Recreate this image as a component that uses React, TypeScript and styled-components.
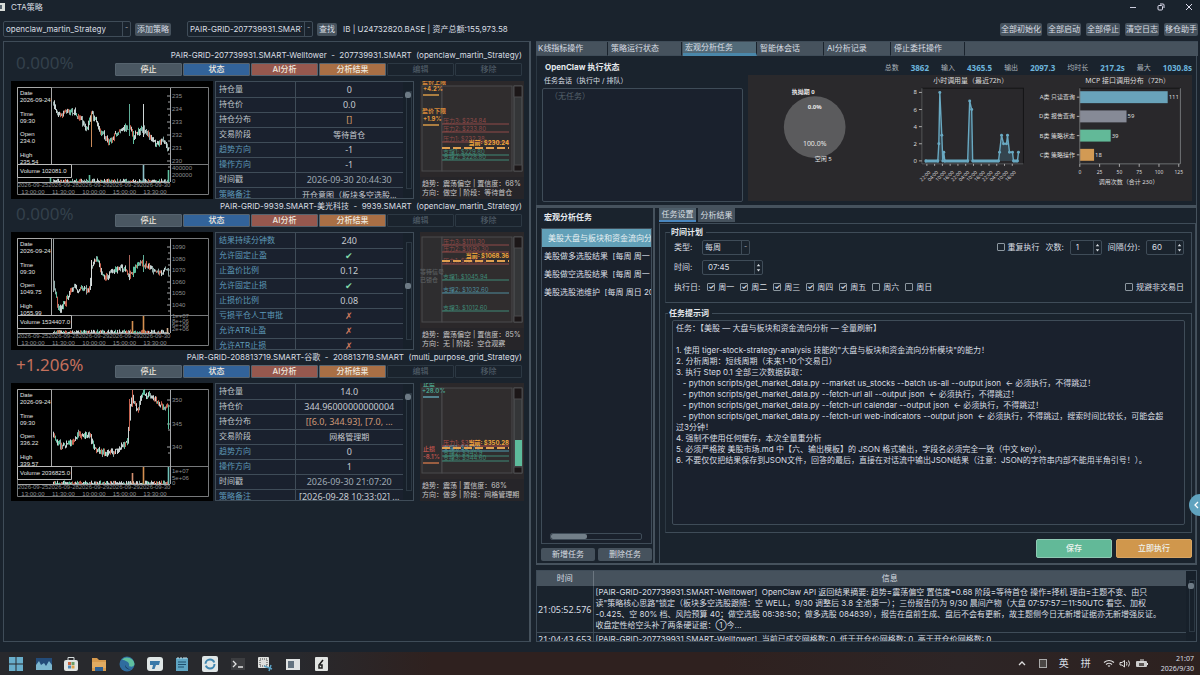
import React from "react";
import styled, { createGlobalStyle } from "styled-components";

const c = {
  bg: "#1a232d",
  deep: "#17202a",
  line: "#3f4c58",
  soft: "#2c3843",
  gray: "#46525d",
  text: "#d9dee3",
  dim: "#a9b1b8",
  teal: "#62b998",
  orange: "#d0974c",
};
const numeric = `"Noto Sans", "Noto Sans CJK SC", sans-serif`;

const Global = createGlobalStyle`
  * { box-sizing: border-box; }
  body { margin: 0; background: ${c.bg}; }
  body, button, input, select, textarea {
    font-family: Inter, "Noto Sans CJK SC", sans-serif;
    font-size: 8px; line-height: 11px; color: ${c.text};
  }
  button, input, select, textarea { margin: 0; padding: 0; border: 0; outline: 0; }
`;

/* ---------- page frame ---------- */
const Page = styled.div`
  min-height: 100vh; display: flex; flex-direction: column; background: ${c.bg}; overflow: hidden;
`;
const TitleBar = styled.header`
  display: flex; align-items: center; height: 14px; gap: 6px; padding-right: 6px;
  h1 { margin: 0; font-size: 8px; font-weight: 400; flex: 1; }
`;
const AppIcon = styled.svg`width: 5px; height: 8px;`;
const WinButtons = styled.div`display: flex; gap: 18px;`;
const WinButton = styled.button`
  background: none; width: 10px; height: 10px; display: flex;
  svg { width: 10px; height: 10px; }
`;
const Toolbar = styled.div`
  display: flex; align-items: center; height: 27px; padding: 3px 2px 0 3px; gap: 4px;
`;
const Spacer = styled.div<{ $w?: number }>`${p => (p.$w ? `width: ${p.$w}px;` : "flex: 1;")}`;
const ToolButton = styled.button`
  background: ${c.gray}; height: 13px; padding: 0 2px; border-radius: 2px; line-height: 13px; white-space: nowrap;
`;
const ToolGroup = styled.div`
  display: flex; gap: 5px;
  ${ToolButton} { padding: 0 1px; }
`;
const Account = styled.span`padding-left: 2px; white-space: nowrap;`;

const SelectBox = styled.span<{ $w: number; $h: number }>`
  position: relative; display: block; width: ${p => p.$w}px; height: ${p => p.$h}px;
  border: 1px solid ${c.line}; border-radius: 2px;
  select {
    appearance: none; display: block; width: 100%; height: 100%; background: transparent;
    padding: 0 10px 0 2px;
  }
  option { background: ${c.bg}; }
  &::after {
    content: "-"; position: absolute; right: 0; top: 0; bottom: 0; width: 7px;
    border-left: 1px solid ${c.line}; color: ${c.dim}; font-size: 7px; text-align: center; pointer-events: none;
  }
`;

const Main = styled.main`
  flex: 1; display: grid; grid-template-columns: 528fr 664fr; gap: 5px; padding: 0 0 0 3px;
`;

/* ---------- strategy cards ---------- */
const Left = styled.section`
  border: 1px solid ${c.line}; border-right: 2px solid ${c.gray}; padding: 6px 5px 0 7px; min-width: 0;
`;
const Card = styled.article`height: 151px;`;
const CardHead = styled.div`
  display: grid; grid-template-columns: 104px 1fr; grid-template-rows: 15px 13px; height: 33px; padding-right: 2px;
`;
const Percent = styled.strong<{ $up: boolean }>`
  grid-row: span 2; font-family: ${numeric}; font-weight: 400; font-size: 17px; line-height: 30px; padding-left: 5px;
  color: ${p => (p.$up ? "#c5705c" : "#33404b")};
`;
const CardTitle = styled.h2`
  margin: 0; font-weight: 400; font-size: 8px; line-height: 15px; text-align: right; white-space: pre;
`;
const CardButtons = styled.div`
  display: grid; grid-template-columns: repeat(6, 1fr); gap: 1px; height: 13px;
`;
const CardButton = styled.button<{ $bg?: string }>`
  line-height: 11px; border-radius: 1px; font-weight: ${p => (p.$bg ? 500 : 400)};
  background: ${p => p.$bg || "transparent"};
  border: 1px solid ${p => (p.$bg ? "#56636e" : c.soft)};
  color: ${p => (p.$bg ? "#efe8df" : "#56626d")};
`;
const CardBody = styled.div`
  display: grid; grid-template-columns: 202px 1fr 104px; gap: 2px; height: 118px;
`;
const Chart = styled.svg`display: block; width: 100%; height: 100%; background: #000;`;
const TableBox = styled.div`
  display: flex; border: 1px solid ${c.line}; overflow: hidden; margin-right: 4px;
`;
const Params = styled.table`
  flex: 1; border-collapse: collapse; table-layout: fixed; height: 120px; background: #1a212e;
  tr { height: 15px; border-bottom: 1px solid ${c.line}; }
  th { width: 79px; text-align: left; font-weight: 400; padding: 0 3px; border-right: 1px solid ${c.line}; white-space: nowrap; }
  td { text-align: center; padding: 0; white-space: nowrap; }
`;
const ParamName = styled.th<{ $own?: boolean }>`color: ${p => (p.$own ? "#5e9ab8" : "#bfc5ca")};`;
const ParamValue = styled.td<{ $color?: string; $cjk?: boolean }>`
  color: ${p => p.$color || "#c5cad0"}; font-family: ${numeric};
  font-size: ${p => (p.$cjk ? 8 : 9)}px;
`;
const VScroll = styled.div<{ $top: number }>`
  width: 10px; flex: none; position: relative; background: ${c.deep};
  &::before { content: ""; position: absolute; left: 3px; top: 9px; bottom: 9px; width: 4px; border: 1px solid ${c.soft}; }
  &::after { content: ""; position: absolute; left: 2px; top: ${p => p.$top}px; width: 6px; height: 6px; border-radius: 2px; background: #6d7a85; }
`;
const Ladder = styled.div`
  background: #262529; display: flex; flex-direction: column; overflow: hidden;
  svg { display: block; height: 98px; width: 104px; }
  p { margin: 0; padding-left: 2px; font-size: 7px; line-height: 9px; white-space: nowrap; color: #c6c6c6; }
`;

/* ---------- right side ---------- */
const Right = styled.section`display: flex; flex-direction: column; min-width: 0;`;
const Tabs = styled.nav`
  display: flex; gap: 1px; height: 15px; background: ${c.gray}; margin-right: 2px; border-top: 1px solid ${c.line};
`;
const Tab = styled.button<{ $w: number; $on?: boolean }>`
  width: ${p => p.$w}px; text-align: left; padding-left: 2px; line-height: 11px; white-space: nowrap;
  background: ${p => (p.$on ? "#526a78" : c.gray)};
  border-bottom: ${p => (p.$on ? "3px solid #4a87aa" : `1px solid ${c.line}`)};
  border-right: 1px solid ${c.bg};
`;
const Status = styled.div`
  display: grid; grid-template-columns: 201px 1fr; gap: 5px; height: 149px; margin-right: 3px;
  padding: 4px 4px 3px 5px; border-right: 1px solid ${c.line}; border-left: 1px solid ${c.soft};
`;
const StatusLeft = styled.div`display: flex; flex-direction: column;`;
const Heading = styled.h3`
  margin: 0; padding-left: 3px; font-size: 8px; line-height: 14px; font-weight: 700; color: #e6eaee;
`;
const Sub = styled.p`margin: 0; padding: 1px 0 0 2px; font-size: 7px; line-height: 12px;`;
const Sessions = styled.div`
  flex: 1; margin-top: 1px; border: 1px solid ${c.line}; border-radius: 2px; padding: 2px 7px; color: #56616c; background: #1a212d;
`;
const Stats = styled.dl`
  display: flex; justify-content: flex-end; margin: 0; height: 15px; align-items: center; font-size: 7px; gap: 12px;
  dt { color: ${c.dim}; }
  dd { margin: 0; font-family: ${numeric}; font-size: 8px; font-weight: 700; color: #6cb4dc; }
`;
const Figures = styled.div`
  display: grid; grid-template-columns: 152fr 142fr 152fr; background: #2a292c; height: 126px;
  svg { display: block; width: 100%; height: 100%; overflow: visible; font-family: ${numeric}; }
`;

const Work = styled.div`
  flex: 1; display: grid; grid-template-columns: 118px 1fr; gap: 4px; margin-right: 3px;
  border: 2px solid ${c.gray}; border-width: 3px 1px 2px 1px;
`;
const TaskPane = styled.div`
  display: flex; flex-direction: column; padding: 2px 1px 2px 4px; border-right: 2px solid ${c.gray}; min-width: 0;
`;
const TaskList = styled.div`
  flex: 1; display: flex; flex-direction: column; margin-top: 4px; border: 1px solid ${c.line}; background: #1a212c; overflow: hidden;
  ul { list-style: none; margin: 0; padding: 0; flex: 1; }
`;
const Task = styled.li<{ $on?: boolean }>`
  height: 18px; line-height: 18px; white-space: pre; overflow: hidden; padding-left: ${p => (p.$on ? 6 : 2)}px;
  background: ${p => (p.$on ? "#62a0b8" : "transparent")}; color: ${p => (p.$on ? "#e8f0f2" : c.text)};
`;
const HScroll = styled.div`
  height: 7px; margin: 0 9px 3px 8px; border: 1px solid ${c.line}; border-radius: 2px; display: flex;
  &::before { content: ""; width: 36px; background: #727f89; border-radius: 2px; }
`;
const TaskButtons = styled.div`
  display: grid; grid-template-columns: 1fr 1fr; gap: 3px; margin-top: 4px;
`;
const Form = styled.div`display: flex; flex-direction: column; min-width: 0;`;
const FormTabs = styled.div`display: flex; gap: 2px; height: 14px;`;
const FormTab = styled.button<{ $on?: boolean }>`
  width: 37px; line-height: 12px; white-space: nowrap; background: ${p => (p.$on ? "#4f5f6b" : c.gray)};
  border-bottom: ${p => (p.$on ? "2px solid #4a87c0" : "0")};
`;
const FormPane = styled.div`
  flex: 1; display: flex; flex-direction: column; border: 1px solid ${c.line}; border-bottom: 0; padding: 3px 3px 3px 5px; margin-top: 1px;
`;
const Group = styled.fieldset<{ $grow?: boolean }>`
  margin: 0; min-width: 0; border: 1px solid ${c.line}; padding: 0 7px 5px 8px; border-left-color: ${c.soft};
  ${p => p.$grow && "flex: 1; display: flex; flex-direction: column; margin-top: 5px; padding: 2px 6px 7px 6px;"}
  legend { font-weight: 700; line-height: 10px; padding: 0 3px 0 1px; margin-left: -4px; color: #e6eaee; }
`;
const Row = styled.div`display: flex; align-items: center; height: 20px; gap: 6px; white-space: nowrap;`;
const RowLabel = styled.label<{ $w: number }>`width: ${p => p.$w}px;`;
const Check = styled.label`
  display: flex; align-items: center; gap: 3px;
  input {
    appearance: none; width: 8px; height: 8px; border: 1px solid #8c979f; border-radius: 1px; display: grid; place-items: center;
  }
  input:checked::after { content: "✓"; font-size: 7px; line-height: 6px; font-weight: 700; }
`;
const Days = styled.div`display: flex; gap: 6px; flex: 1; padding-left: 1px;`;
const Spin = styled.span<{ $w: number }>`
  display: flex; width: ${p => p.$w}px; height: 15px; border: 1px solid ${c.line}; border-radius: 2px; font-size: 6px;
  input { flex: 1; min-width: 0; width: 10px; background: none; padding-left: 5px; }
`;
const SpinArrows = styled.svg`
  width: 8px; height: 13px; border-left: 1px solid ${c.line}; fill: ${c.text};
`;
const Prompt = styled.textarea`
  flex: 1; width: 100%; min-height: 180px; resize: none; display: block; background: #1a212d; white-space: pre; overflow: hidden;
  border: 1px solid ${c.line}; padding: 2px 3px; border-radius: 2px;
`;
const Actions = styled.div`
  display: flex; justify-content: flex-end; gap: 4px; margin: 6px 0 2px;
`;
const Action = styled.button<{ $bg: string; $edge: string }>`
  width: 76px; height: 19px; border-radius: 2px; background: ${p => p.$bg}; border: 1px solid ${p => p.$edge}; color: #eef3ef; font-weight: 500;
`;
const Bubble = styled.button`
  position: fixed; right: -11px; top: 494px; width: 22px; height: 22px; border-radius: 11px; background: #60a3bf;
  text-align: left; padding-left: 5px; display: flex; align-items: center;
  svg { width: 5px; height: 8px; }
`;

const LogBox = styled.div`
  display: flex; height: 72px; margin: 5px 3px 0 0; border: 1px solid ${c.line}; overflow: hidden;
`;
const Log = styled.table`
  flex: 1; border-collapse: collapse; table-layout: fixed; height: 70px;
  th { font-weight: 400; background: ${c.gray}; height: 15px; line-height: 15px; padding: 0; }
  th:first-child { width: 56px; border-right: 1px solid #6b7680; }
  td { padding: 1px 2px; vertical-align: middle; border-bottom: 1px solid ${c.line}; white-space: pre; overflow: hidden; }
  td:first-child { font-family: ${numeric}; font-size: 9px; padding: 0; text-align: center; border-right: 1px solid ${c.line}; }
`;

/* ---------- taskbar ---------- */
const Taskbar = styled.footer`
  display: flex; align-items: center; justify-content: space-between; height: 23px; margin-top: 10px; padding: 0 6px 0 8px;
  background: linear-gradient(90deg, #28292d 0 25%, #2f211f 36% 60%, #2d2526 80%, #2d211f);
`;
const Apps = styled.div`
  display: flex; justify-content: space-between; width: 321px;
  button { background: none; width: 16px; height: 16px; }
  svg { display: block; width: 16px; height: 16px; }
`;
const Tray = styled.div`
  display: flex; align-items: center; gap: 12px; font-size: 10px;
  svg { display: block; height: 11px; }
`;
const TrayGroup = styled.div`display: flex; gap: 4px; align-items: center;`;
const Clock = styled.time`font-family: ${numeric}; font-size: 7px; line-height: 10px; text-align: right;`;

/* ---------- candle chart ---------- */
type Pt = [number, number];
function rng(seed: number) {
  let s = seed;
  return () => {
    s = (s * 16807) % 2147483647;
    return s / 2147483647;
  };
}
function levelAt(points: Pt[], x: number) {
  for (let i = 1; i < points.length; i++) {
    const [x0, y0] = points[i - 1];
    const [x1, y1] = points[i];
    if (x <= x1) return y0 + ((y1 - y0) * (x - x0)) / (x1 - x0 || 1);
  }
  return points[points.length - 1][1];
}

type ChartData = {
  seed: number;
  points: Pt[];
  spikes: [number, number, number, string][];
  volumes: [number, number, string][];
  ticks: [number, string][];
  volTicks: [number, string][];
  open: string;
  high: string;
  volume: string;
};

function CandleChart({ d }: { d: ChartData }) {
  const r = rng(d.seed);
  const palette = ["#5fc0a0", "#c9d2d2", "#c5614e", "#c9d2d2", "#8ea9a6"];
  const bars: React.ReactNode[] = [];
  let prev = levelAt(d.points, 42);
  for (let x = 42; x < 158; x += 1) {
    const y = levelAt(d.points, x) + (r() - 0.5) * 5;
    const color = palette[Math.floor(r() * 5)];
    const top = Math.min(prev, y) - r() * 3;
    const bottom = Math.max(prev, y) + r() * 3;
    bars.push(<path key={x} d={`M${x + 0.5} ${top}V${bottom}`} stroke={color} strokeWidth="1" />);
    bars.push(<path key={`v${x}`} d={`M${x + 0.5} 101v${-0.5 - r() * 3}`} stroke={color} strokeWidth="1" />);
    prev = y;
  }
  const dates = ["2026-09-25", "2026-09-28", "2026-09-29", "2026-09-29", "2026-09-30"];
  const times = ["13:00:00", "11:30:00", "10:00:00", "15:00:00", "13:30:00"];
  return (
    <Chart viewBox="0 0 202 118" fontFamily="Liberation Sans, sans-serif" fontSize="6" fill="#e2e2e2">
      <path d="M6.5 6.500H197.500V113.500H6.500ZM6.500 83.500H197.500" fill="none" stroke="#77797b" />
      <path d="M159.500 7V101M7 101.500H159" stroke="#a5a7a9" />
      {d.ticks.map(([y]) => (
        <path key={y} d={`M159 ${y}h-3M159 ${y + 6}h-2`} stroke="#a5a7a9" />
      ))}
      {bars}
      {d.spikes.map(([x, a, b, col]) => (
        <path key={`${x}${a}`} d={`M${x + 0.5} ${a}V${b}`} stroke={col} />
      ))}
      {d.volumes.map(([x, h, col]) => (
        <path key={x} d={`M${x + 0.5} 101v${-h}`} stroke={col} strokeWidth="1.6" />
      ))}
      <path d="M6.500 6.500H40.500V83.500H6.500Z" fill="#000" stroke="#a8a8a8" />
      {["Date", "2026-09-24", "", "Time", "09:30", "", "Open", d.open, "", "High", d.high].map((t, i) => (
        <text key={i} x="9" y={14 + i * 6.9}>{t}</text>
      ))}
      <path d="M6.500 83.500H60.500V96.500H6.500Z" fill="#000" stroke="#bcbcbc" />
      <text x="9" y="92">{`Volume ${d.volume}`}</text>
      <g fill="#8d8f91">
        {d.ticks.map(([y, t]) => <text key={t} x="161" y={y + 2}>{t}</text>)}
        {d.volTicks.map(([y, t]) => <text key={t} x="161" y={y + 2}>{t}</text>)}
        {dates.map((t, i) => (
          <text key={i} x={22 + i * 30.5} y="106" textAnchor="middle">{t}</text>
        ))}
        {times.map((t, i) => (
          <text key={i} x={22 + i * 30.5} y="113" textAnchor="middle">{t}</text>
        ))}
      </g>
    </Chart>
  );
}

/* ---------- price ladder ---------- */
type Level = { y: number; label: string; color: string };
type LadderData = {
  side: { x: number; y: number; text: string; color: string }[];
  marks: [number, string][];
  levels: Level[];
  now: { y: number; text: string };
  gauge?: boolean;
  notes: [string, string];
};

function PriceLadder({ d }: { d: LadderData }) {
  return (
    <Ladder>
      <svg viewBox="0 0 104 98" fontSize="6">
        <rect x="0" y="0" width="104" height="96" fill="#2b282a" />
        <rect x="2" y="5" width="20" height="85" fill="#2e2d2f" stroke="#4b4b4c" />
        <rect x="22" y="5" width="70" height="85" fill="#302d2e" stroke="#4b4b4c" />
        <rect x="94" y="5" width="8" height="85" fill="#343638" stroke="#56585a" />
        <path d="M94 5h8v11h-8zM94 84h8v6h-8z" fill="#1c1718" stroke="#4b4b4c" />
        {d.gauge && <rect x="95" y="57" width="7" height="26" fill="#5dbb9b" />}
        {d.levels.map(l => (
          <g key={l.label}>
            <path d={`M22 ${l.y}H89`} stroke={l.color} />
            <text x="23" y={l.y - 1} fill={l.color}>{l.label}</text>
          </g>
        ))}
        {d.marks.map(([y, col]) => (
          <path key={y} d={`M3 ${y}h16`} stroke={col} strokeWidth="1.4" />
        ))}
        {d.side.map(s => (
          <text key={s.text} x={s.x} y={s.y} fill={s.color} fontWeight="700">{s.text}</text>
        ))}
        <path d={`M22 ${d.now.y}H89`} stroke="#e0a050" strokeWidth="2" strokeDasharray="8 3" />
        <text x="89" y={d.now.y - 3} textAnchor="end" fill="#f0a73c" fontWeight="700">{d.now.text}</text>
      </svg>
      <p>{d.notes[0]}</p>
      <p>{d.notes[1]}</p>
    </Ladder>
  );
}

/* ---------- card data ---------- */
type Param = { name: string; value: string; own?: boolean; color?: string; cjk?: boolean };
type Strategy = { pct: string; title: string; params: Param[]; chart: ChartData; ladder: LadderData; scroll: number };

const ok = "#7fd6a8";
const no = "#d07a5e";
const dimRed = "#8f4a48";
const dimTeal = "#3f8a76";

const strategies: Strategy[] = [
  {
    pct: "0.000%",
    title: "PAIR-GRID-207739931.SMART-Welltower  -  207739931.SMART  (openclaw_martin_Strategy)",
    scroll: 10,
    params: [
      { name: "持仓量", value: "0" },
      { name: "持仓价", value: "0.0" },
      { name: "持仓分布", value: "[]", color: "#d09a68" },
      { name: "交易阶段", value: "等待首仓", cjk: true },
      { name: "趋势方向", value: "-1", own: true },
      { name: "操作方向", value: "-1", own: true },
      { name: "时间戳", value: "2026-09-30 20:44:30", color: "#9fa9b3" },
      { name: "策略备注", value: "开仓意图（板块多空选股...", own: true, cjk: true },
    ],
    chart: {
      seed: 7,
      points: [[42, 24], [48, 34], [60, 29], [68, 36], [75, 49], [80, 32], [88, 50], [98, 60], [108, 49], [118, 46], [122, 55], [132, 48], [145, 64], [152, 58], [158, 72]],
      spikes: [[80, 32, 66, "#c88a5a"], [118, 23, 55, "#5fae98"], [122, 50, 63, "#5fc0a0"], [132, 23, 56, "#cfd6d6"]],
      volumes: [[39, 4, "#5fc0a0"], [78, 7, "#5fc0a0"], [132, 17, "#8dc0c8"], [157, 12, "#5fc0a0"]],
      ticks: [[15, "235"], [28, "234"], [41, "233"], [54, "232"], [67, "231"], [80, "230"]],
      volTicks: [[87, "400000"], [94, "200000"], [100, "0"]],
      open: "234.0", high: "235.54", volume: "102081.0",
    },
    ladder: {
      side: [
        { x: 2, y: 3, text: "盈价上限", color: "#d98a3a" },
        { x: 3, y: 10, text: "+4.2%", color: "#e69a3e" },
        { x: 2, y: 32, text: "盈价下限", color: "#d98a3a" },
        { x: 3, y: 40, text: "+1.9%", color: "#e69a3e" },
      ],
      marks: [[14, "#e3a24a"], [44, "#e3a24a"]],
      levels: [
        { y: 43, label: "压力3: $234.84", color: dimRed },
        { y: 51, label: "压力2: $233.80", color: dimRed },
        { y: 61, label: "压力1: $232.38", color: dimRed },
        { y: 74, label: "支撑1: $229.80", color: dimTeal },
        { y: 79, label: "支撑2: $228.80", color: dimTeal },
      ],
      now: { y: 67, text: "当前: $230.24" },
      notes: ["趋势：震荡偏空 | 置信度：68%", "方向：做空 | 阶段：等待首仓"],
    },
  },
  {
    pct: "0.000%",
    title: "PAIR-GRID-9939.SMART-美光科技  -  9939.SMART  (openclaw_martin_Strategy)",
    scroll: 50,
    params: [
      { name: "结果持续分钟数", value: "240", own: true },
      { name: "允许固定止盈", value: "✔", own: true, color: ok },
      { name: "止盈价比例", value: "0.12", own: true },
      { name: "允许固定止损", value: "✔", own: true, color: ok },
      { name: "止损价比例", value: "0.08", own: true },
      { name: "亏损平仓人工审批", value: "✗", own: true, color: no },
      { name: "允许ATR止盈", value: "✗", own: true, color: no },
      { name: "允许ATR止损", value: "✗", own: true, color: no },
    ],
    chart: {
      seed: 21,
      points: [[42, 52], [47, 78], [52, 74], [60, 56], [78, 58], [80, 34], [86, 28], [92, 46], [100, 40], [112, 36], [118, 44], [128, 32], [140, 36], [148, 42], [154, 36], [158, 44]],
      spikes: [[42, 7, 60, "#9aa2a4"], [80, 28, 54, "#d9dddd"], [118, 23, 42, "#a8645a"], [132, 23, 40, "#5fae98"]],
      volumes: [[48, 3, "#d28a54"], [121, 12, "#d48f50"], [132, 17, "#d48f50"], [156, 5, "#d0b090"]],
      ticks: [[15, "1090"], [27, "1080"], [38, "1070"], [50, "1060"], [61, "1050"], [73, "1040"]],
      volTicks: [[84, "1e+07"], [89, "8e+06"], [93, "6e+06"], [97, "2e+06"]],
      open: "1049.75", high: "1055.99", volume: "1534407.0",
    },
    ladder: {
      side: [
        { x: 0, y: 42, text: "等待信号", color: "#55585a" },
        { x: 0, y: 50, text: "已锁仓", color: "#55585a" },
      ],
      marks: [],
      levels: [
        { y: 13, label: "压力3: $1111.30", color: dimRed },
        { y: 20, label: "压力2: $1090.30", color: dimRed },
        { y: 32, label: "压力1: $1075.30", color: dimRed },
        { y: 48, label: "支撑1: $1045.94", color: dimTeal },
        { y: 61, label: "支撑2: $1032.60", color: "#4f8c9c" },
        { y: 79, label: "支撑3: $1012.60", color: dimTeal },
      ],
      now: { y: 29, text: "当前: $1068.36" },
      notes: ["趋势：震荡偏空 | 置信度：85%", "方向：无 | 阶段：空仓观察"],
    },
  },
  {
    pct: "+1.206%",
    title: "PAIR-GRID-208813719.SMART-谷歌  -  208813719.SMART  (multi_purpose_grid_Strategy)",
    scroll: 10,
    params: [
      { name: "持仓量", value: "14.0" },
      { name: "持仓价", value: "344.96000000000004" },
      { name: "持仓分布", value: "[[6.0, 344.93], [7.0, ...", color: "#cf9a78" },
      { name: "交易阶段", value: "网格管理期", cjk: true },
      { name: "趋势方向", value: "0", own: true },
      { name: "操作方向", value: "1", own: true },
      { name: "时间戳", value: "2026-09-30 21:07:20", color: "#9fa9b3" },
      { name: "策略备注", value: "[2026-09-28 10:33:02] ...", own: true },
    ],
    chart: {
      seed: 33,
      points: [[42, 54], [50, 64], [58, 60], [66, 52], [78, 53], [84, 68], [96, 70], [106, 68], [116, 58], [117, 46], [120, 14], [126, 26], [132, 10], [140, 14], [148, 22], [157, 25], [158, 50]],
      spikes: [[118, 16, 48, "#c5614e"], [121, 7, 24, "#c5614e"], [157, 22, 46, "#5fc0a0"]],
      volumes: [[121, 11, "#d48f70"], [132, 17, "#d48f50"], [157, 17, "#6fc0b8"]],
      ticks: [[17, "350"], [41, "345"], [64, "340"]],
      volTicks: [[88, "1e+07"], [95, "5e+06"], [100, "0"]],
      open: "336.22", high: "339.57", volume: "2036825.0",
    },
    ladder: {
      side: [
        { x: 3, y: 3, text: "止盈", color: "#4a9c88" },
        { x: 2, y: 10, text: "+28.0%", color: "#4a9c88" },
        { x: 3, y: 68, text: "止损", color: "#b5504a" },
        { x: 3, y: 76, text: "-8.1%", color: "#b5504a" },
      ],
      marks: [[14, "#62a8b8"], [80, "#c9744a"]],
      levels: [
        { y: 63, label: "压力1: $353.1", color: "#b5504a" },
        { y: 68, label: "支撑1: $347.8", color: "#4f9cae" },
        { y: 73, label: "支撑2: $345.9", color: dimTeal },
        { y: 78, label: "支撑3: $344.60", color: dimTeal },
      ],
      now: { y: 65, text: "当前: $350.28" },
      gauge: true,
      notes: ["趋势：震荡 | 置信度：68%", "方向：做多 | 阶段：网格管理期"],
    },
  },
];

function StrategyCard({ s }: { s: Strategy }) {
  return (
    <Card>
      <CardHead>
        <Percent $up={s.pct.startsWith("+")}>{s.pct}</Percent>
        <CardTitle>{s.title}</CardTitle>
        <CardButtons>
          <CardButton $bg="#4a5762">停止</CardButton>
          <CardButton $bg="#32639a">状态</CardButton>
          <CardButton $bg="#96584e">AI分析</CardButton>
          <CardButton $bg="#a96f45">分析结果</CardButton>
          <CardButton disabled>编辑</CardButton>
          <CardButton disabled>移除</CardButton>
        </CardButtons>
      </CardHead>
      <CardBody>
        <CandleChart d={s.chart} />
        <TableBox>
          <Params>
            <tbody>
              {s.params.map(p => (
                <tr key={p.name}>
                  <ParamName scope="row" $own={p.own}>{p.name}</ParamName>
                  <ParamValue $color={p.color} $cjk={p.cjk}>{p.value}</ParamValue>
                </tr>
              ))}
            </tbody>
          </Params>
          <VScroll $top={s.scroll} />
        </TableBox>
        <PriceLadder d={s.ladder} />
      </CardBody>
    </Card>
  );
}

/* ---------- statistics figures ---------- */
function IdlePie() {
  return (
    <svg viewBox="0 0 152 126" fontSize="6" fill="#e6e6e6">
      <circle cx="67" cy="52" r="31" fill="#5b5b5d" />
      <text x="67" y="19" textAnchor="end" fontWeight="700">执拗期 0</text>
      <text x="67" y="34" textAnchor="middle" fontWeight="700">0.0%</text>
      <text x="67" y="71" textAnchor="middle" fontSize="7">100.0%</text>
      <text x="67" y="86">空闲 5</text>
    </svg>
  );
}

const hourly: Pt[] = [
  [27, 0], [39, 0], [40, 2], [41, 8], [43, 3], [44, 0], [45, 1], [46, 0], [69, 0], [71, 7], [73, 6], [74, 0], [100, 0],
  [101, 1], [103, 3], [105, 2], [108, 2], [109, 3], [111, 1], [114, 1], [115, 0], [119, 0], [120, 1],
];
function HourlyCalls() {
  const y = (v: number) => 86 - v * 8.6;
  const labels = ["22:00", "04:00", "10:00", "16:00", "22:00", "04:00", "10:00", "16:00", "22:00", "04:00", "10:00", "16:00"];
  const line = hourly.map(([x, v]) => `${x},${y(v)}`).join(" ");
  return (
    <svg viewBox="0 0 142 126" fontSize="6" fill="#dcdcdc">
      <text x="72" y="8" textAnchor="middle" fontSize="7">小时调用量（最近72h）</text>
      <rect x="23" y="13" width="102" height="76" fill="#29282b" stroke="#151517" />
      <path d="M23 13V89H125" fill="none" stroke="#5d5f61" />
      {[0, 2, 4, 6, 8].map(v => (
        <g key={v}>
          <path d={`M20 ${y(v)}h3`} stroke="#aaa" />
          <text x="18" y={y(v) + 2} textAnchor="end">{v}</text>
        </g>
      ))}
      <polygon points={`27,86 ${line} 120,86`} fill="#3c5665" fillOpacity="0.6" />
      <polyline points={line} fill="none" stroke="#69a9c2" strokeWidth="1.4" />
      <path d="M26 86H40M45 86H70M74 86H100M115 86H119" stroke="#69a9c2" strokeWidth="3" />
      {hourly.map(([x, v]) => <circle key={x} cx={x} cy={y(v)} r="1.5" fill="#69a9c2" />)}
      {labels.map((t, i) => (
        <g key={i}>
          <path d={`M${28 + i * 7.8} 89v2`} stroke="#aaa" />
          <text transform={`translate(${32 + i * 7.8} 98) rotate(-45)`} textAnchor="end" fontSize="5">{t}</text>
        </g>
      ))}
    </svg>
  );
}

function CallBars() {
  const rows: [string, number, string][] = [
    ["A类 只读查询", 111, "#69a3ba"],
    ["D类 报告查询", 59, "#868a96"],
    ["B类 策略状态", 39, "#62b998"],
    ["C类 策略操作", 18, "#d29a54"],
  ];
  return (
    <svg viewBox="0 0 152 126" fontSize="6" fill="#dcdcdc">
      <text x="87" y="8" textAnchor="middle" fontSize="7">MCP 接口调用分布（72h）</text>
      <rect x="39" y="13" width="101" height="76" fill="#29282b" stroke="#151517" />
      {rows.map(([name, n, color], i) => (
        <g key={name}>
          <rect x="39" y={16 + i * 19.3} width={n * 0.795} height="12" fill={color} />
          <path d={`M36 ${22 + i * 19.3}h3`} stroke="#aaa" />
          <text x="34" y={24 + i * 19.3} textAnchor="end">{name}</text>
          <text x={40 + n * 0.795} y={24 + i * 19.3}>{n}</text>
        </g>
      ))}
      <path d="M39 13V89H140V13" fill="none" stroke="#77797b" />
      {[0, 25, 50, 75, 100, 125].map(v => (
        <g key={v}>
          <path d={`M${39 + v * 0.795} 89v3`} stroke="#aaa" />
          <text x={39 + v * 0.795} y="99" textAnchor="middle" fontSize="5">{v}</text>
        </g>
      ))}
      <text x="88" y="109" textAnchor="middle">调用次数（合计 230）</text>
    </svg>
  );
}

const promptText = `任务：【美股 — 大盘与板块和资金流向分析 — 全量刷新】

1. 使用 tiger-stock-strategy-analysis 技能的"大盘与板块和资金流向分析模块"的能力！
2. 分析周期：短线周期（未来1-10个交易日）
3. 执行 Step 0.1 全部三次数据获取：
   - python scripts/get_market_data.py --market us_stocks --batch us-all --output json  ← 必须执行，不得跳过！
   - python scripts/get_market_data.py --fetch-url all --output json  ← 必须执行，不得跳过！
   - python scripts/get_market_data.py --fetch-url calendar --output json  ← 必须执行，不得跳过！
   - python scripts/get_market_data.py --fetch-url web-indicators --output json  ← 必须执行，不得跳过，搜索时间比较长，可能会超
过3分钟！
4. 强制不使用任何缓存，本次全量重分析
5. 必须严格按 美股市场.md 中【六、输出模板】的 JSON 格式输出，字段名必须完全一致（中文 key）。
6. 不要仅仅把结果保存到JSON文件，回答的最后，直接在对话流中输出JSON结果（注意：JSON的字符串内部不能用半角引号！）。`;

const logText = `[PAIR-GRID-207739931.SMART-Welltower]  OpenClaw API 返回结果摘要: 趋势=震荡偏空 置信度=0.68 阶段=等待首仓 操作=择机 理由=主题不变、由只
读"策略核心思路"锁定（板块多空选股跟随：空 WELL，9/30 调整后 3.8 全池第一）；三份报告仍为 9/30 晨间产物（大盘 07:57:57＝11:50UTC 看空、加权
-0.425、空 80% 档、风险预算 40；做空选股 08:38:50；做多选股 084839），报告在盘前生成、盘后不会有更新，故主题侧今日无新增证据亦无新增强反证。
收盘定性给空头补了两条硬证据：①今...`;

const appIcons: [string, React.ReactNode][] = [
  ["开始", <path d="M1 1h6.5v6.5H1zM8.5 1H15v6.5H8.500zM1 8.500h6.500V15H1zM8.500 8.500H15V15H8.500z" fill="#69aecb" />],
  ["监控", <><rect x="0" y="2" width="16" height="12" fill="#234b78" /><path d="M0 14V9l3-4 2 4 3-2 2 3 3-5 3 4v5z" fill="#7db7cf" /></>],
  ["商店", <><path d="M5 4V1.500h6V4" fill="none" stroke="#d5dcdc" /><rect x="1" y="4" width="14" height="11" rx="2" fill="#dfe4e2" /><path d="M5 6h3v3H5z" fill="#c9653f" /><path d="M8.500 6h3v3h-3z" fill="#6a9e66" /><path d="M5 9.500h3v3H5z" fill="#4a88b8" /><path d="M8.500 9.500h3v3h-3z" fill="#dca24a" /></>],
  ["文件", <><path d="M1 2h5l2 2h7v11H1z" fill="#d69a4e" /><path d="M1 6h14v6H1z" fill="#e0ab62" /><path d="M4 11h8v4H4z" fill="#2d5f92" /></>],
  ["浏览器", <><circle cx="8" cy="8" r="7.500" fill="#2f6d9f" /><path d="M3 3.500A7.500 7.500 0 0 1 15.500 8c0 3-5 3.500-5.500 1.500C11 6 6 4.500 3 3.500z" fill="#5fbf9e" /><path d="M6 9c0 3 3 5 6.500 4.500A7.500 7.500 0 0 1 6 9z" fill="#17304a" /></>],
  ["交易", <><rect x="0" y="1" width="16" height="14" rx="3" fill="#dfe6e6" /><path d="M3 5h10l-1 4H9l-1.500 4H5l1-4H3z" fill="#3978a8" /></>],
  ["记事本", <><rect x="2" y="2" width="12" height="13" fill="#5fa5c3" /><path d="M4 1v2M7 1v2M10 1v2M12 1v2" stroke="#c8dfe8" /><path d="M4 6h8M4 8.500h8M4 11h6" stroke="#1f4f6d" /></>],
  ["同步", <><rect x="0" y="0" width="16" height="16" rx="2" fill="#dfe6e6" /><circle cx="8" cy="8" r="4.500" fill="none" stroke="#3f86b0" strokeWidth="2" strokeDasharray="12 2" /></>],
  ["终端", <><rect x="1" y="2" width="14" height="12" fill="#3c3d40" /><path d="M3 5l3 3-3 3M8 11h5" fill="none" stroke="#e2e2e2" strokeWidth="1.300" /></>],
  ["截图", <><rect x="1" y="1" width="11" height="11" rx="1" fill="#dfe0de" /><rect x="3" y="3" width="7" height="7" fill="none" stroke="#444" strokeDasharray="1 1" /><path d="M7 10l8 3M12 15l2-6" stroke="#5aa0c2" strokeWidth="1.500" /></>],
  ["策略", <><rect x="1" y="3" width="14" height="11" fill="#dfe2e2" /><rect x="3" y="5" width="6" height="7" fill="#63727f" /></>],
  ["笔记", <><rect x="2" y="1" width="13" height="14" rx="1" fill="#e2e4e2" /><path d="M10 4L6 9v3h3v-3H7" fill="none" stroke="#1c1c1c" strokeWidth="1.500" /></>],
];

const days: [string, boolean][] = [["周一", true], ["周二", true], ["周三", true], ["周四", true], ["周五", true], ["周六", false], ["周日", false]];

function SpinBox({ id, w, value }: { id: string; w: number; value: string }) {
  return (
    <Spin $w={w}>
      <input id={id} defaultValue={value} />
      <SpinArrows viewBox="0 0 8 13"><path d="M2 5l2-2.500 2 2.500zM2 8.500h4L4 11z" /></SpinArrows>
    </Spin>
  );
}

export default function App() {
  return (
    <Page>
      <Global />
      <TitleBar>
        <AppIcon viewBox="0 0 5 8"><path d="M0 0h5v8H0z" fill="#d8dcd8" /><path d="M0 2h2v4H0z" fill="#56636e" /></AppIcon>
        <h1>CTA策略</h1>
        <WinButtons>
          <WinButton aria-label="最小化"><svg viewBox="0 0 10 10"><path d="M2 5.500h6" stroke="#ccd" /></svg></WinButton>
          <WinButton aria-label="还原"><svg viewBox="0 0 10 10" fill="none" stroke="#dde"><rect x="2" y="3.500" width="4.500" height="4.500" rx="1" /><path d="M4 2h3q1 0 1 1v3" /></svg></WinButton>
          <WinButton aria-label="关闭"><svg viewBox="0 0 10 10"><path d="M2 2l6 6M8 2L2 8" stroke="#dde" /></svg></WinButton>
        </WinButtons>
      </TitleBar>
      <Toolbar>
        <SelectBox $w={128} $h={16}>
          <select aria-label="策略"><option>openclaw_martin_Strategy</option></select>
        </SelectBox>
        <ToolButton>添加策略</ToolButton>
        <Spacer $w={8} />
        <SelectBox $w={126} $h={16}>
          <select aria-label="合约"><option>PAIR-GRID-207739931.SMART</option></select>
        </SelectBox>
        <ToolButton>查找</ToolButton>
        <Account>IB | U24732820.BASE | 资产总额:155,973.58</Account>
        <Spacer />
        <ToolGroup>
          {["全部初始化", "全部启动", "全部停止", "清空日志", "移仓助手"].map(t => <ToolButton key={t}>{t}</ToolButton>)}
        </ToolGroup>
      </Toolbar>

      <Main>
        <Left>{strategies.map(s => <StrategyCard key={s.title} s={s} />)}</Left>
        <Right>
          <Tabs>
            <Tab $w={72}>K线指标操作</Tab>
            <Tab $w={73}>策略运行状态</Tab>
            <Tab $w={74} $on>宏观分析任务</Tab>
            <Tab $w={66}>智能体会话</Tab>
            <Tab $w={66}>AI分析记录</Tab>
            <Tab $w={73}>停止委托操作</Tab>
          </Tabs>
          <Status>
            <StatusLeft>
              <Heading>OpenClaw 执行状态</Heading>
              <Sub>任务会话（执行中 / 排队）</Sub>
              <Sessions>（无任务）</Sessions>
            </StatusLeft>
            <div>
              <Stats>
                <dt>总数</dt><dd>3862</dd>
                <dt>输入</dt><dd>4365.5</dd>
                <dt>输出</dt><dd>2097.3</dd>
                <dt>均时长</dt><dd>217.2s</dd>
                <dt>最大</dt><dd>1030.8s</dd>
              </Stats>
              <Figures>
                <IdlePie />
                <HourlyCalls />
                <CallBars />
              </Figures>
            </div>
          </Status>
          <Work>
            <TaskPane>
              <Heading>宏观分析任务</Heading>
              <TaskList>
                <ul>
                  <Task $on>美股大盘与板块和资金流向分析</Task>
                  <Task>美股做多选股结果  [每周 周一 2</Task>
                  <Task>美股做空选股结果  [每周 周一 2</Task>
                  <Task>美股选股池维护  [每周 周日 20</Task>
                </ul>
                <HScroll />
              </TaskList>
              <TaskButtons>
                <ToolButton>新增任务</ToolButton>
                <ToolButton>删除任务</ToolButton>
              </TaskButtons>
            </TaskPane>
            <Form>
              <FormTabs>
                <FormTab $on>任务设置</FormTab>
                <FormTab>分析结果</FormTab>
              </FormTabs>
              <FormPane>
                <Group>
                  <legend>时间计划</legend>
                  <Row>
                    <RowLabel $w={22} htmlFor="kind">类型:</RowLabel>
                    <SelectBox $w={48} $h={15}><select id="kind"><option>每周</option></select></SelectBox>
                    <Spacer />
                    <Check><input type="checkbox" />重复执行</Check>
                    <label htmlFor="times">次数:</label>
                    <SpinBox id="times" w={32} value="1" />
                    <label htmlFor="every">间隔(分):</label>
                    <SpinBox id="every" w={38} value="60" />
                  </Row>
                  <Row>
                    <RowLabel $w={22} htmlFor="at">时间:</RowLabel>
                    <SpinBox id="at" w={61} value="07:45" />
                  </Row>
                  <Row>
                    <span>执行日:</span>
                    <Days>
                      {days.map(([d, on]) => <Check key={d}><input type="checkbox" defaultChecked={on} />{d}</Check>)}
                    </Days>
                    <Check><input type="checkbox" />规避非交易日</Check>
                  </Row>
                </Group>
                <Group $grow>
                  <legend>任务提示词</legend>
                  <Prompt aria-label="任务提示词" defaultValue={promptText} spellCheck={false} />
                </Group>
                <Actions>
                  <Action $bg={c.teal} $edge="#8fc9b4">保存</Action>
                  <Action $bg={c.orange} $edge="#d9a563">立即执行</Action>
                </Actions>
              </FormPane>
            </Form>
          </Work>
          <LogBox>
            <Log>
              <thead><tr><th>时间</th><th>信息</th></tr></thead>
              <tbody>
                <tr><td>21:05:52.576</td><td>{logText}</td></tr>
                <tr><td>21:04:43.653</td><td>[PAIR-GRID-207739931.SMART-Welltower]  当前已成交网格数: 0, 低于开仓价网格数: 0, 高于开仓价网格数: 0</td></tr>
              </tbody>
            </Log>
            <VScroll $top={12} />
          </LogBox>
        </Right>
      </Main>

      <Taskbar>
        <Apps>
          {appIcons.map(([name, art]) => (
            <button key={name} aria-label={name}><svg viewBox="0 0 16 16">{art}</svg></button>
          ))}
        </Apps>
        <Tray>
          <svg viewBox="0 0 10 11" width="10"><path d="M2 7l3-3 3 3" fill="none" stroke="#ddd" strokeWidth="1.300" /></svg>
          <svg viewBox="0 0 8 11" width="8"><rect x="0.500" y="1.500" width="7" height="8" fill="#4a4644" stroke="#aaa" /></svg>
          <span>英</span>
          <span>拼</span>
          <TrayGroup>
            <svg viewBox="0 0 12 11" width="12" fill="none" stroke="#ddd" strokeWidth="1.200"><path d="M1 4.500q5-4 10 0M3 6.500q3-2.500 6 0M5 8.300q1-.8 2 0" /></svg>
            <svg viewBox="0 0 12 11" width="12" fill="none" stroke="#ddd"><path d="M1 4.500h2l2.500-2v6.500L3 7H1zM7.500 4q1 1.700 0 3.500M9.500 2.500q2 3 0 6" /></svg>
            <svg viewBox="0 0 14 11" width="14"><rect x="1" y="3" width="11" height="6" rx="1" fill="#ccc" /><path d="M12.500 5v2M6 1v4M8 1v4" stroke="#ddd" /><path d="M4 5h5v3H4z" fill="#5a5452" /></svg>
          </TrayGroup>
          <Clock>21:07<br />2026/9/30</Clock>
        </Tray>
      </Taskbar>
      <Bubble aria-label="展开"><svg viewBox="0 0 5 8"><path d="M4 1L1 4l3 3" fill="none" stroke="#fff" strokeWidth="1.300" /></svg></Bubble>
    </Page>
  );
}
